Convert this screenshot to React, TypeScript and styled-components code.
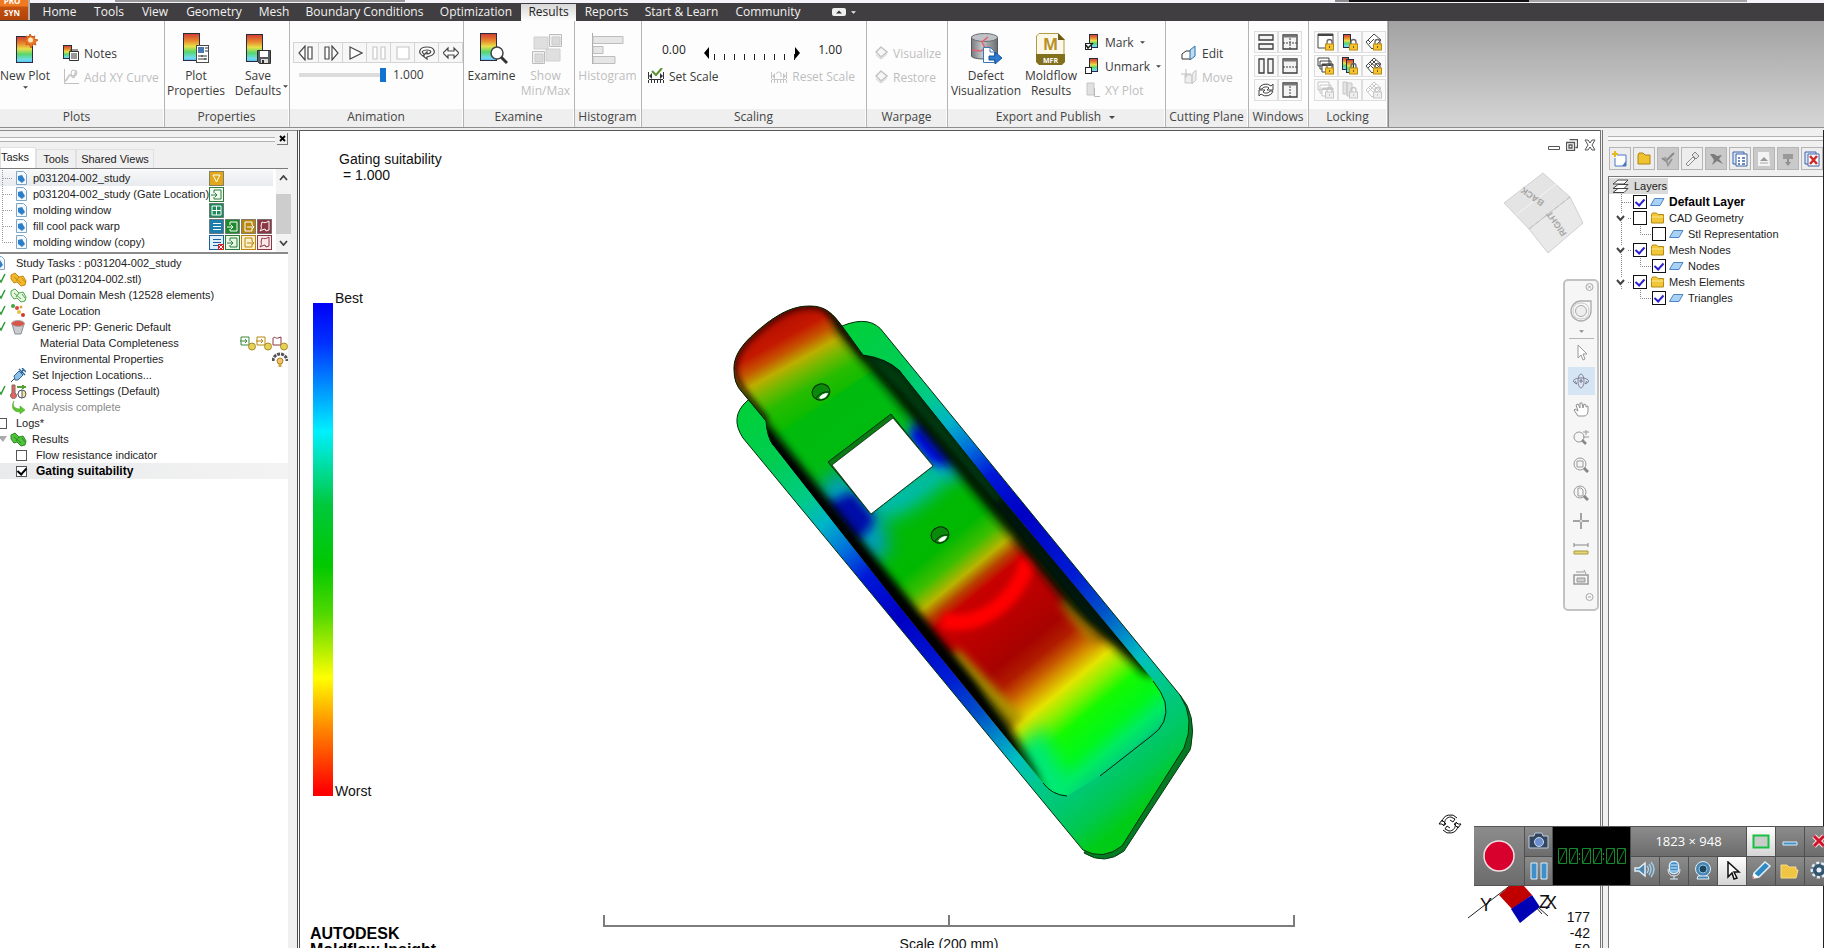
import React, { ReactNode } from 'react';
import styled, { createGlobalStyle, css } from 'styled-components';

const uiFont = `"Open Sans", "Noto Sans", sans-serif`;
const classicFont = `"Liberation Sans", Arial, sans-serif`;

const GlobalStyle = createGlobalStyle`
  * { box-sizing: border-box; }
  body { margin: 0; background: #fff; overflow: hidden; }
  button { font: inherit; color: inherit; padding: 0; margin: 0; border: 0; background: none; cursor: pointer; }
  svg { display: block; flex: none; }
`;

/* ---------- frame ---------- */
const App_ = styled.div`
  display: flex;
  flex-direction: column;
  height: 100vh;
  position: relative;
  overflow: hidden;
  font-family: ${uiFont};
  font-size: 12px;
  color: #3a3a3a;
`;
const TitleStrip = styled.div`
  display: flex;
  height: 3px;
  flex: none;
  background: #f4f4fa;
`;
const StripBar = styled.span<{ $w: number; $gap?: number; $c: string; $h?: number }>`
  width: ${p => p.$w}px;
  height: ${p => p.$h ?? 2}px;
  margin-left: ${p => p.$gap ?? 0}px;
  background: ${p => p.$c};
`;
const MenuBar = styled.nav`
  display: flex;
  height: 18px;
  flex: none;
  padding-left: 33px;
  background: #403e40;
  color: #f2f2f2;
`;
const MenuTab = styled.button<{ $w: number; $active?: boolean }>`
  width: ${p => p.$w}px;
  height: 17px;
  margin-top: 1px;
  line-height: 16px;
  white-space: nowrap;
  display: flex;
  justify-content: center;
  ${p => p.$active && css`background: linear-gradient(#d8d8d8, #fdfdfd); color: #222;`}
`;
const MenuToggle = styled.button`
  display: flex;
  align-items: center;
  gap: 5px;
  margin-left: 22px;
`;
const AppButton = styled.button`
  position: absolute;
  left: 0;
  top: 0;
  width: 30px;
  height: 20px;
  border-right: 2px solid #b9aca4;
  background: linear-gradient(#ef7a22 0 6px, #c4520f 7px, #b0440a);
  color: #fff;
  font-size: 8px;
  font-weight: 700;
  line-height: 8px;
  overflow: hidden;
  display: flex;
  flex-direction: column;
  justify-content: flex-end;
  align-items: center;
  padding: 0 4px 3px 0;
  gap: 4px;
`;

/* ---------- ribbon ---------- */
const Ribbon = styled.header`
  display: flex;
  height: 107px;
  flex: none;
  background: linear-gradient(90deg, #9b9b9b, #b5b5b5);
  border-bottom: 1px solid #8e8e8e;
`;
const RibbonRest = styled.div`
  flex: 1;
  background: linear-gradient(#a2a2a2, #b9b9b9 45%, #d6d6d6);
  border-left: 1px solid #8a8a8a;
`;
const GroupBox = styled.section<{ $w: number }>`
  display: flex;
  flex-direction: column;
  width: ${p => p.$w}px;
  flex: none;
  background: #fdfdfd;
  border-right: 1px solid #b4b4b4;
  padding: 0 1px 0 0;
`;
const GroupBody = styled.div<{ $pad?: string }>`
  flex: 1;
  display: flex;
  align-items: flex-start;
  padding: ${p => p.$pad ?? '0'};
`;
const GroupName = styled.h2<{ $cut?: boolean }>`
  margin: 0;
  height: 18px;
  padding: 0 ${p => (p.$cut ? 10 : 0)}px 2px 0;
  line-height: 16px;
  font-size: 12px;
  font-weight: 400;
  text-align: center;
  white-space: nowrap;
  background: #efefef;
  color: #444;
  display: flex;
  align-items: center;
  justify-content: center;
  gap: 7px;
`;
const BigBtn = styled.button<{ $w: number; $off?: boolean }>`
  display: flex;
  flex-direction: column;
  align-items: center;
  gap: 3px;
  width: ${p => p.$w}px;
  padding-top: 12px;
  flex: none;
  line-height: 15px;
  white-space: pre;
  text-align: center;
  position: relative;
  ${p => p.$off && css`color: #bdbdbd;`}
`;
const CornerCaret = styled.span`
  position: absolute;
  right: 1px;
  bottom: 10px;
`;
const SmallCol = styled.div<{ $top: number; $left: number }>`
  display: flex;
  flex-direction: column;
  padding: ${p => p.$top}px 0 0 ${p => p.$left}px;
`;
const SmallBtn = styled.button<{ $off?: boolean; $gap?: number }>`
  display: flex;
  align-items: center;
  gap: ${p => p.$gap ?? 5}px;
  height: 24px;
  white-space: nowrap;
  ${p => p.$off && css`color: #bdbdbd;`}
`;
const AnimCol = styled.div`
  display: flex;
  flex-direction: column;
  gap: 5px;
`;
const AnimRow = styled.div`
  display: flex;
  border: 1px solid #d4d4d4;
`;
const AnimBtn = styled.button`
  width: 24px;
  height: 19px;
  display: flex;
  align-items: center;
  justify-content: center;
  background: #f7f7f7;
  & + & { border-left: 1px solid #d4d4d4; }
`;
const SliderRow = styled.label`
  display: flex;
  align-items: center;
  gap: 7px;
  height: 16px;
  line-height: 14px;
  padding: 0 0 2px 6px;
`;
const Slider = styled.input`
  appearance: none;
  width: 87px;
  height: 14px;
  margin: 0;
  background: linear-gradient(#0000 5px, #dcdcdc 5px 9px, #0000 9px);
  &::-webkit-slider-thumb {
    appearance: none;
    width: 6px;
    height: 14px;
    background: #1173cf;
  }
`;
const ScaleCol = styled.div`
  flex: 1;
  display: flex;
  flex-direction: column;
  gap: 4px;
`;
const ScaleRow = styled.div`
  display: flex;
  justify-content: space-between;
  height: 19px;
  line-height: 18px;
  padding: 0 23px 0 14px;
  color: #222;
`;
const ScaleBtns = styled.div`
  display: flex;
  justify-content: space-between;
  padding-right: 10px;
`;
const IconGrid = styled.div<{ $cols: number }>`
  display: grid;
  grid-template-columns: repeat(${p => p.$cols}, 24px);
  grid-auto-rows: 22px;
  row-gap: 2px;
`;
const GridBtn = styled.button`
  display: flex;
  align-items: center;
  justify-content: center;
  border: 1px solid #dedede;
  background: #fafafa;
`;

/* ---------- work area ---------- */
const Work = styled.main`
  flex: 1;
  min-height: 0;
  display: flex;
  background: #f0f0f0;
  border-top: 2px solid #efefef;
  font-family: ${classicFont};
`;
const LeftDock = styled.aside`
  width: 297px;
  flex: none;
  display: flex;
  flex-direction: column;
  padding-right: 9px;
  font-size: 11px;
  color: #1d1d1d;
  border-top: 1px solid #8a8a8a;
`;
const GripRow = styled.div`
  display: flex;
  align-items: center;
  gap: 2px;
  height: 16px;
  flex: none;
`;
const Grip = styled.span`
  flex: 1;
  height: 5px;
  border-top: 1px solid #b2b2b2;
  border-bottom: 1px solid #b2b2b2;
  background: #fafafa;
`;
const CloseBox = styled.button`
  width: 11px;
  height: 12px;
  border-right: 1px solid #777;
  border-bottom: 1px solid #777;
  display: flex;
  align-items: center;
  justify-content: center;
`;
const Tabs = styled.div`
  display: flex;
  align-items: flex-end;
  height: 21px;
  flex: none;
`;
const Tab = styled.button<{ $w: number; $on?: boolean }>`
  width: ${p => p.$w}px;
  height: ${p => (p.$on ? 21 : 19)}px;
  background: ${p => (p.$on ? '#fff' : '#f0f0f0')};
  border: 1px solid #e0e0e0;
  border-bottom: 0;
  white-space: nowrap;
  font-size: 11px;
  ${p => p.$on && css`padding: 0 9px 3px 0;`}
`;
const StudyBox = styled.div`
  display: flex;
  height: 86px;
  flex: none;
  border-top: 1px solid #7c7c7c;
  border-bottom: 2px solid #8a8a8a;
  background: #fff;
`;
const StudyList = styled.div`
  flex: 1;
  padding-top: 1px;
`;
const StudyRow = styled.div<{ $on?: boolean }>`
  display: flex;
  align-items: center;
  height: 16px;
  margin-right: 3px;
  white-space: nowrap;
  background: ${p => (p.$on ? 'linear-gradient(#f7f8f9, #e8ebee)' : 'none')};
`;
const StudyName = styled.span`
  width: 176px;
`;
const ScrollBar = styled.div`
  width: 15px;
  display: flex;
  flex-direction: column;
  align-items: center;
  background: #f3f3f3;
`;
const ScrollBtn = styled.button`
  height: 18px;
  width: 15px;
  display: flex;
  align-items: center;
  justify-content: center;
`;
const ScrollThumb = styled.div`
  width: 15px;
  height: 40px;
  margin-top: 7px;
  background: #cdcdcd;
`;
const TaskTree = styled.div`
  flex: 1;
  background: #fff;
  overflow: hidden;
  padding-top: 1px;
`;
const TaskRow = styled.div<{ $on?: boolean }>`
  display: flex;
  align-items: center;
  height: 16px;
  margin-left: -9px;
  white-space: nowrap;
  ${p => p.$on && css`background: linear-gradient(90deg, #e9eaec, #f3f3f3); font-size: 12px; font-weight: 700; color: #000;`}
`;
const Slot = styled.span<{ $w: number }>`
  width: ${p => p.$w}px;
  display: flex;
  flex: none;
  align-items: center;
`;
const Muted = styled.span`color: #8a8a8a;`;
const RowEnd = styled.span`
  margin-left: auto;
  display: flex;
  align-items: center;
`;
const Check = styled.input<{ $size: number; $ink: string }>`
  appearance: none;
  width: ${p => p.$size}px;
  height: ${p => p.$size}px;
  margin: 0;
  flex: none;
  border: 1px solid ${p => (p.$size > 11 ? '#111' : '#555')};
  background: #fff;
  display: grid;
  place-items: center;
  &:checked::before {
    content: '';
    width: 4px;
    height: 7px;
    border: solid ${p => p.$ink};
    border-width: 0 2px 2px 0;
    transform: translateY(-1px) rotate(42deg);
  }
`;
const RowLabel = styled.label`
  display: flex;
  align-items: center;
`;

/* ---------- viewport ---------- */
const Viewport = styled.section`
  flex: 1;
  position: relative;
  min-width: 0;
  overflow: hidden;
  background: #fff;
  border-top: 1px solid #555;
  border-left: 3px double #4c4c4c;
  color: #111;
  font-size: 14px;
  line-height: 16px;
`;
const Scene = styled.svg`
  position: absolute;
  inset: 0;
  width: 100%;
  height: 100%;
`;
const Caption = styled.div`
  position: absolute;
  left: 39px;
  top: 20px;
  white-space: pre;
`;
const Legend = styled.div`
  position: absolute;
  left: 13px;
  top: 172px;
  display: flex;
  gap: 2px;
`;
const LegendBar = styled.div`
  width: 20px;
  height: 493px;
  background: linear-gradient(#0000f5, #0030ff 8%, #00f0ff 26%, #00c83c 41%, #00c800 53%, #50d800 63%, #ffff00 76%, #ff8a00 86%, #ff0000 99%);
`;
const LegendEnds = styled.div`
  display: flex;
  flex-direction: column;
  justify-content: space-between;
  margin-top: -13px;
  height: 509px;
`;
const Brand = styled.div`
  position: absolute;
  left: 10px;
  top: 795px;
  font-size: 16px;
  font-weight: 700;
  line-height: 16px;
  color: #000;
`;
const ScaleMark = styled.div`
  position: absolute;
  left: 50%;
  top: 784px;
  width: 692px;
  margin-left: -347px;
  text-align: center;
`;
const Ruler = styled.div`
  display: flex;
  height: 12px;
  margin-bottom: 9px;
  border: 2px solid #7d7d7d;
  border-top: 0;
  &::after {
    content: '';
    margin: auto;
    width: 2px;
    height: 10px;
    background: #7d7d7d;
  }
`;
const Angles = styled.div`
  position: absolute;
  right: 10px;
  top: 778px;
  text-align: right;
`;
const WindowBtns = styled.div`
  position: absolute;
  right: 4px;
  top: 8px;
  display: flex;
  gap: 6px;
  align-items: center;
`;
const NavBar = styled.div`
  position: absolute;
  right: 1px;
  top: 148px;
  width: 36px;
  height: 332px;
  border: 2px solid #c2c2c2;
  border-radius: 5px;
  background: #f6f6f6;
  display: flex;
  flex-direction: column;
  align-items: center;
`;
const NavEnd = styled.button`
  align-self: flex-end;
  height: 12px;
  padding-right: 3px;
`;
const NavWheel = styled.button`
  display: flex;
  flex-direction: column;
  align-items: center;
  width: 25px;
  height: 46px;
  padding-top: 7px;
  gap: 8px;
  border-bottom: 1px solid #b5b5b5;
`;
const NavBtn = styled.button<{ $on?: boolean }>`
  width: 27px;
  height: 28px;
  display: flex;
  align-items: center;
  justify-content: center;
  background: ${p => (p.$on ? '#d5e5f3' : 'none')};
`;
const SpinCursor = styled.div`
  position: absolute;
  right: 138px;
  top: 682px;
`;
const RightDock = styled.aside`
  width: 224px;
  flex: none;
  display: flex;
  flex-direction: column;
  padding-left: 5px;
  border-left: 3px double #777;
  border-right: 1px solid #222;
  font-size: 11px;
  color: #1d1d1d;
`;
const LayerTools = styled.div`
  display: flex;
  gap: 2px;
  height: 29px;
  padding-left: 1px;
  flex: none;
  overflow: hidden;
`;
const LayerBtn = styled.button<{ $off?: boolean }>`
  width: 22px;
  height: 23px;
  flex: none;
  border: 1px solid #b5b5b5;
  background: ${p => (p.$off ? '#c9c9c9' : '#ededed')};
  display: flex;
  align-items: center;
  justify-content: center;
`;
const LayerGrip = styled.div`
  height: 17px;
  flex: none;
  display: flex;
  align-items: center;
`;
const LayerTree = styled.div`
  flex: 1;
  background: #fff;
  border-top: 1px solid #777;
  border-left: 1px solid #777;
  padding-top: 1px;
`;
const LayerRoot = styled.div`
  display: flex;
  align-items: center;
  gap: 5px;
  height: 16px;
  width: 59px;
  padding-left: 3px;
  background: #dadada;
`;
const LayerRow = styled.div<{ $strong?: boolean }>`
  display: flex;
  align-items: center;
  height: 16px;
  white-space: nowrap;
  ${p => p.$strong && css`font-weight: 700; font-size: 12px; color: #000;`}
`;
const LayerLabel = styled.label`
  display: flex;
  align-items: center;
  & > svg { margin: 0 4px 0 3px; }
`;

/* ---------- recorder ---------- */
const Recorder = styled.div`
  position: absolute;
  right: 0;
  bottom: 62px;
  width: 350px;
  height: 60px;
  overflow: hidden;
  display: flex;
  gap: 1px;
  background: #505050;
  border-top: 1px solid #555;
  border-bottom: 1px solid #555;
  color: #fff;
`;
const RecBtn = styled.button<{ $w: number; $on?: boolean }>`
  width: ${p => p.$w}px;
  flex: none;
  display: flex;
  align-items: center;
  justify-content: center;
  background: ${p => (p.$on ? 'linear-gradient(#fff, #d5d5d5)' : 'linear-gradient(#8c8c8c, #6c6c6c)')};
`;
const RecStack = styled.div`
  display: flex;
  flex-direction: column;
  gap: 1px;
  flex: none;
  & > button { flex: 1; }
`;
const RecRow = styled.div`
  display: flex;
  gap: 1px;
  flex: 1;
`;
const RecTime = styled.div`
  width: 77px;
  flex: none;
  background: #000;
  display: flex;
  align-items: center;
  justify-content: center;
`;
const RecSize = styled.div`
  width: 115px;
  flex: none;
  font-size: 13px;
  line-height: 28px;
  text-align: center;
  background: linear-gradient(#8c8c8c, #6c6c6c);
`;

/* ---------- small drawings ---------- */
type IconProps = { w?: number; h?: number; vb?: string; children: ReactNode };
const Icon = ({ w = 16, h = w, vb, children }: IconProps) => (
  <svg width={w} height={h} viewBox={vb ?? `0 0 ${w} ${h}`} fill="none" aria-hidden="true">{children}</svg>
);
const Caret = ({ c = '#444', w = 5 }: { c?: string; w?: number }) => (
  <Icon w={w} h={3} vb="0 0 6 3"><path d="M0 0h6l-3 3z" fill={c} /></Icon>
);
const Plot = ({ x = 0, y = 0, w = 17, h = 28 }: { x?: number; y?: number; w?: number; h?: number }) => (
  <rect x={x + 0.5} y={y + 0.5} width={w - 1} height={h - 1} fill="url(#rainbow)" stroke="#2b2b40" />
);
const Defs = () => (
  <svg width="0" height="0" style={{ position: 'absolute' }} aria-hidden="true">
    <defs>
      <linearGradient id="rainbow" x1="0" y1="0" x2="0" y2="1">
        <stop offset="0" stopColor="#cf3b35" />
        <stop offset=".28" stopColor="#e98b2d" />
        <stop offset=".48" stopColor="#e6e04a" />
        <stop offset=".68" stopColor="#57d66b" />
        <stop offset=".9" stopColor="#6fdcf2" />
        <stop offset="1" stopColor="#55b8ee" />
      </linearGradient>
      <linearGradient id="metal" x1="0" x2="1" y1="0" y2="0">
        <stop offset="0" stopColor="#77797c" />
        <stop offset=".4" stopColor="#c3c5c8" />
        <stop offset="1" stopColor="#6a6c70" />
      </linearGradient>
    </defs>
  </svg>
);

const NewPlotIcon = () => (
  <Icon w={32}><Plot x={7} y={3} w={17} h={27} />
    <path d="M21 1l2 3 3-1-1 3 4 1-3 2 1 3-3-1-2 4-2-4-3 1 1-3-4-2 4-1-1-3 3 1z" fill="#ea7a26" stroke="#d2601a" />
    <circle cx="21.500" cy="7" r="2.500" fill="#ffe9c0" /></Icon>
);
const PlotPropsIcon = () => (
  <Icon w={32}><Plot x={3} y={0} /><rect x="16.500" y="12.500" width="12" height="17" fill="#fff" stroke="#4a4a4a" />
    <path d="M18 14h6v6h-6z" fill="#4878b0" /><path d="M25 15h3M25 18h3M18 23h9M18 26h9M22 22v2M25 25v2" stroke="#333" /></Icon>
);
const SaveIcon = () => (
  <Icon w={32}><Plot x={4} y={1} /><path d="M15.500 17.500h13v13h-11l-2-2z" fill="#5b5b5f" stroke="#2e2e2e" />
    <path d="M18 18h8v6h-8z" fill="#fff" /><path d="M19 26h7v4h-7z" fill="#ddd" /><path d="M20 27h2v3h-2z" fill="#333" /></Icon>
);
const ExamineIcon = () => (
  <Icon w={32}><Plot x={4} y={0} /><circle cx="21" cy="20" r="6" fill="#fff" stroke="#444" strokeWidth="1.500" />
    <path d="M25 24l6 6" stroke="#333" strokeWidth="3" /></Icon>
);
const MinMaxIcon = () => (
  <Icon w={32}><path d="M4 4h14v12H4zM16 16h14v12H16z" fill="#dfdfdf" stroke="#d0d0d0" />
    <path d="M19.500 1.500h12v12h-12zM2.500 18.500h12v12h-12z" fill="#f2f2f2" stroke="#bdbdbd" />
    <path d="M22 4h8v8h-8zM5 21h8v8H5z" fill="#dadada" stroke="#ccc" /></Icon>
);
const HistIcon = () => (
  <Icon w={34} h={32}><path d="M1.500 0v31" stroke="#aaa" /><path d="M2 3.500h30v7H2zM2 13.500h10v7H2zM2 23.500h22v7H2z" fill="#e6e6e6" stroke="#bdbdbd" /></Icon>
);
const DefectIcon = () => (
  <Icon w={32}><path d="M1.500 4v19c0 4 26 4 26 0V4z" fill="url(#metal)" stroke="#55585c" />
    <ellipse cx="14.500" cy="4.500" rx="13" ry="4" fill="#bfc2c6" stroke="#6b6d70" />
    <path d="M18 4l-6 5 3 6-4 3-9-1M15 15l4-1" stroke="#e2606c" strokeWidth="1.500" />
    <path d="M13.500 14.500h7l4 4v11h-11z" fill="#fff" stroke="#3c78b4" /><path d="M20 14v5h5" stroke="#3c78b4" />
    <path d="M19 23h6v-4l7 6-7 6v-4h-6z" fill="#2b7bd0" stroke="#15549b" /></Icon>
);
const MfrIcon = () => (
  <Icon w={32}><path d="M4 .500h19l6 6V23H1.500V3z" fill="#fbf8ea" stroke="#b39b40" /><path d="M23 0v7h7z" fill="#6e5a14" />
    <path d="M1 21h29v8l-3 3H4l-3-3z" fill="#82701f" />
    <text x="15.500" y="17" fontSize="16" fontWeight="700" textAnchor="middle" fill="#b8912b" fontFamily="Open Sans">M</text>
    <text x="15.500" y="30" fontSize="7" fontWeight="700" textAnchor="middle" fill="#fff" fontFamily="Open Sans">MFR</text></Icon>
);
const NotesIcon = () => (
  <Icon><Plot x={0} y={0} w={9} h={14} /><path d="M6.500 6.500h9v9h-9z" fill="#fff" stroke="#333" />
    <path d="M8 4v3M10 4v3M12 4v3M14 4v3M8 9h6M8 11h6M8 13h6" stroke="#333" /></Icon>
);
const CurveIcon = () => (
  <Icon><path d="M1.500 0v14.500H16" stroke="#c0c0c0" /><path d="M2 12c3-1 3-6 5-6s2 3 4 2l2-6" stroke="#ccc" strokeWidth="2" />
    <circle cx="11" cy="4" r="3" stroke="#c4c4c4" /></Icon>
);
const SetScaleIcon = ({ off = false }) => {
  const c = off ? '#c4c4c4' : '#333';
  return (
    <Icon><path d="M.500 4v7M15.500 4v7M1 11.500h14M3.500 12v3M6.500 12v3M9.500 12v3M12.500 12v3M.500 12v3M15.500 12v3" stroke={c} />
      <path d="M1 8l3-3v6zM15 8l-3-3v6z" fill={c} /><path d={off ? 'M5 6a3 3 0 015-1v4' : 'M4 3l4 4 6-7'} stroke={off ? c : '#5f9130'} strokeWidth={off ? 1 : 2} /></Icon>
  );
};
const WarpIcon = () => (
  <Icon w={14} h={16}><path d="M7 2l6 5-6 5-5-5z" stroke="#c4c4c4" strokeWidth="1.500" fill="#f6f6f6" /><path d="M2 10l5 4 6-5" stroke="#d0d0d0" /></Icon>
);
const MarkIcon = ({ kind }: { kind: 'on' | 'off' | 'xy' }) =>
  kind === 'xy' ? (
    <Icon w={15} h={16}><path d="M2 1h7v12H2z" fill="#e0e0e0" stroke="#c4c4c4" /><path d="M9.500 6v8.500H15" stroke="#b8b8b8" /></Icon>
  ) : (
    <Icon w={14} h={16}><Plot x={4} y={0} w={9} h={14} /><rect x=".500" y="9.500" width="6" height="6" fill="#fff" stroke="#222" />
      {kind === 'on' && <path d="M1 11l2 3 5-5" stroke="#222" strokeWidth="1.500" />}</Icon>
  );
const CutIcon = () => (
  <Icon><path d="M1 14V9l4-3h5v8z" fill="#fff" stroke="#333" /><path d="M9 15V5l5-4v10z" fill="#b9ddf5" stroke="#2f6f9f" /></Icon>
);
const MoveIcon = () => (
  <Icon><path d="M4 6h7v8H4zM11 15V5l4-4v10z" fill="#eee" stroke="#c8c8c8" /><path d="M5 0v9M0 5h10" stroke="#bdbdbd" /></Icon>
);
/* outline and dashed divider of each window arrangement */
const windowArt: [string, string][] = [
  ['M1 1h14v5H1zM1 10h14v5H1z', ''], ['M1 1h14v14H1z', 'M8 4v11M1 9h14'], ['M1 1h5v14H1zM10 1h5v14h-5z', ''],
  ['M1 1h14v14H1z', 'M1 9h14'], ['', ''], ['M1 1h14v14H1z', 'M8 4v11'],
];
const WindowIcon = ({ n }: { n: number }) => (
  <Icon vb="0 0 16 16">
    {n === 4 ? (
      <path d="M1 7a7 6 0 0112-3l2-2v6h-6l2-2a4 3 0 00-7 1zM15 9a7 6 0 01-12 3l-2 2V8h6l-2 2a4 3 0 007-1z" fill="#fff" stroke="#444" />
    ) : (
      <>
        <path d={windowArt[n][0]} stroke="#3c3c3c" strokeWidth="1.300" fill="#f3f3f3" />
        {n % 2 === 1 && <path d="M1 2.500h14" stroke="#777" strokeWidth="2" />}
        <path d={windowArt[n][1]} stroke="#3c3c3c" strokeDasharray="2 1" />
      </>
    )}
  </Icon>
);
const LockIcon = ({ n }: { n: number }) => {
  const off = n > 5, c = off ? '#c6c6c6' : '#444', col = n % 3, multi = n > 2;
  return (
    <Icon w={18} vb="0 0 18 18">
      {col === 0 && <>{multi && <path d="M1 1h11v8H1zM3 4h11v8H3z" fill="#fff" stroke={c} />}
        <path d={multi ? 'M5 7h11v8H5z' : 'M1 1h15v14H1z'} fill="#fff" stroke={c} /><path d={multi ? 'M5 8h11' : 'M1 2h15'} stroke={c} strokeWidth="2" /></>}
      {col === 1 && (off ? <path d="M2 1h4v12H2zM6 2h5v13H6z" fill="#e4e4e4" stroke={c} /> : <>{multi && <Plot x={1} y={0} w={7} h={13} />}<Plot x={multi ? 5 : 2} y={multi ? 2 : 1} w={8} h={14} /></>)}
      {col === 2 && <><path d="M1 9l8-8 7 6-9 9z" fill="#fff" stroke={c} /><path d={multi ? 'M5 5l7 6M3 11l8-8M4 7l7 7M7 3l6 6' : 'M3 7l3 3M4 11l5-5'} stroke={c} /></>}
      <path d="M10 12V9a2.500 2.500 0 015 0v3" stroke={off ? c : '#666'} strokeWidth="1.300" />
      <rect x="8.500" y="11" width="8" height="6" fill={off ? '#eee' : '#f6c431'} stroke={off ? c : '#b98a12'} /><path d="M12.500 13v2" stroke={off ? c : '#7a5a00'} />
    </Icon>
  );
};
const animPaths: [string, boolean][] = [
  ['M7 1v14L1 8zM10 2h4v12h-4z', false], ['M2 2h4v12H2zM9 1v14l6-7z', false], ['M3 2l12 6-12 6z', false],
  ['M2 2h4v12H2zM10 2h4v12h-4z', true], ['M2 2h12v12H2z', true],
  ['M5 11C-2 9 0 2 8 2s10 7 3 9l-3 1v2L4 11l4-4v2c5-1 5-4 0-4S2 7 5 9z', false], ['M0 8l5-5v3h6V3l5 5-5 5v-3H5v3z', false],
];
const DocIcon = () => (
  <Icon w={16} h={14}><path d="M3.500.500h7l3 3v10h-10z" fill="#f2f8fd" stroke="#7fa6c4" /><path d="M5 5l4-1 3 5-3 3-4-3z" fill="#2f7fc8" /></Icon>
);
const Tick = () => <Icon w={16} h={12}><path d="M8 6l2 3 4-8" stroke="#2c9a35" strokeWidth="1.500" /></Icon>;
const PartIcon = ({ fill, line }: { fill: string; line: string }) => (
  <Icon w={17} h={15}><path d="M1 3l4-2 4 4 4-1 3 5-1 4-4 1-4-4-3 1-3-4z" fill={fill} stroke={line} /><path d="M4 5l7 6M9 5l-3 4M12 6l3 4" stroke={line} /></Icon>
);
const GateIcon = () => (
  <Icon w={16} h={14}><circle cx="3" cy="2" r="2" fill="#3aa83a" /><circle cx="7" cy="4" r="2" fill="#d44" /><circle cx="11" cy="3" r="1.500" fill="#e9a23b" /><circle cx="9" cy="8" r="2" fill="#e6c33b" /><circle cx="13" cy="11" r="2" fill="#cc3a30" /></Icon>
);
const CupIcon = () => (
  <Icon w={16} h={15}><path d="M2 4h12l-3 10H5z" fill="#c9ccd0" stroke="#8a8d90" /><ellipse cx="8" cy="3.500" rx="6.500" ry="3" fill="#d85548" stroke="#aaa" /></Icon>
);
const SyringeIcon = () => (
  <Icon w={16} h={15}><path d="M1 14l4-4" stroke="#444" /><path d="M4 8l5-5 4 4-5 5H5z" fill="#8fc0e8" stroke="#2b659a" /><path d="M9 1l6 6M11 5l3-4M12 0l4 4" stroke="#2b659a" strokeWidth="1.500" /></Icon>
);
const ProcessIcon = () => (
  <Icon w={17} h={15}><path d="M2 1h3v8a3 3 0 11-3 0z" fill="#d66" stroke="#865" /><path d="M7 3h9M13 1v4" stroke="#56a23a" strokeWidth="2" /><circle cx="12" cy="10" r="4" fill="#f4e48a" stroke="#557" /><path d="M12 6a4 4 0 000 8z" fill="#fff" stroke="#557" /></Icon>
);
const ArrowIcon = () => <Icon w={16} h={14}><path d="M4 1c-2 4 0 8 6 8V6l5 4-5 4v-2C2 12 1 6 4 1z" fill="#5cc62e" stroke="#3f9a1c" strokeWidth=".500" /></Icon>;
const ChipIcon = ({ bg, ink, kind }: { bg: string; ink: string; kind: string }) => (
  <Icon w={16} h={15}><rect x=".500" y=".500" width="14" height="14" fill={bg} stroke={ink === '#fff' ? '#555a' : ink} />
    {kind === 'tri' && <path d="M4 4h7l-3.500 7z" stroke={ink} />}
    {kind === 'in' && <path d="M5 6V3h7v9H5v-2M2 8h6M6 6l2 2-2 2" stroke={ink} />}
    {kind === 'out' && <path d="M11 6V3H4v9h7V9M6 8h7M11 6l2 2-2 2" stroke={ink} />}
    {kind === 'grid' && <path d="M3 3h9v9H3zM7.500 3v9M3 7.500h9" stroke={ink} />}
    {kind === 'lines' && <path d="M4 4.500h8M4 7.500h8M4 10.500h8" stroke={ink} />}
    {kind === 'warp' && <path d="M5 3c2 1 4 1 7-1v9l-3 1-1-2-3 1-2 1c1-2 2-3 1-5z" stroke={ink} />}
    {kind === 'linesx' && <><path d="M4 4.500h8M4 7.500h8M4 10.500h5" stroke={ink} /><path d="M9 9h6v6H9z" fill="#c22" /><path d="M10 10l4 4M14 10l-4 4" stroke="#fff" /></>}
  </Icon>
);
const MatIcon = ({ kind, c }: { kind: string; c: string }) => (
  <Icon w={16} h={15}><path d={kind === 'warp' ? 'M1 2c2-2 3 1 5 0l3-1v8H1z' : 'M1 1h8v8H1zM0 5h7M5 3l2 2-2 2'} stroke={c} /><circle cx="12" cy="10.500" r="3.500" fill="#e8cf5a" stroke="#a58f22" /></Icon>
);
const DialIcon = () => (
  <Icon w={16} h={15}><path d="M1 9a7 7 0 0114 0" stroke="#555" strokeWidth="3" strokeDasharray="3 1" /><circle cx="8" cy="9" r="3" fill="#f2c268" stroke="#b5812a" /><path d="M8 12v3" stroke="#d9a33b" strokeWidth="3" /></Icon>
);
const PlaneIcon = () => <Icon w={15} h={10}><path d="M4.500 1.500H14l-4 7H.500z" fill="#a9d0f7" stroke="#4c86c6" /></Icon>;
const FolderIcon = ({ w = 15 }: { w?: number }) => (
  <Icon w={w} h={12} vb="0 0 14 12"><path d="M1 2.500l1-1.500h4l1.500 1.500H13v8.500H1z" fill="#f3c735" stroke="#b28a17" /><path d="M1 5h12" stroke="#fbe48e" /></Icon>
);
const Chevron = ({ up = false }: { up?: boolean }) => <Icon w={9} h={6}><path d={up ? 'M1 5l3.500-4L8 5' : 'M1 1l3.500 4L8 1'} stroke="#444" strokeWidth="1.800" /></Icon>;

/* ---------- part model, drawn in length / width coordinates of the part ---------- */
const AXES = 'matrix(.635 .772 .772 -.635 0 0)';
const bodyPath = 'M734 370C733 352 748 338 767 323C782 312 794 306 810 306C826 306 833 314 842 326L863 355Q886 358 900 371L1003 500L1153 680Q1174 704 1159 726Q1152 733 1100 776L1067 796Q1052 795 1043 783L900 607L773 445Q767 437 766 421L742 392Q734 384 734 370Z';
const platePath = 'M842 326Q871 314 884 333L1180 695Q1196 719 1184 748L1122 846Q1103 861 1083 850L743 438Q729 417 747 401Z';

const lengthStops: [number, string][] = [
  [735, '#0b0'], [868, '#00bb10'], [1020, '#00b800'], [1040, '#3cbe00'], [1057, '#b8b400'], [1069, '#b84200'], [1080, '#c80000'],
  [1112, '#bc0000'], [1150, '#a60300'], [1168, '#b01c00'], [1182, '#c65800'], [1193, '#d89400'], [1208, '#e4e400'], [1224, '#8af000'],
  [1242, '#14fa00'], [1268, '#00f81c'], [1284, '#00ec60'], [1300, '#00d078'],
];
const plateStops: [number, string][] = [
  [790, '#00d03a'], [847, '#00cd50'], [896, '#00cb86'], [929, '#00b4c8'], [962, '#0070dc'], [996, '#0018d8'], [1048, '#0000c4'],
  [1128, '#001cd4'], [1174, '#0052c8'], [1208, '#0092c8'], [1233, '#00c0c0'], [1266, '#00c88c'], [1300, '#00c86e'], [1325, '#00c850'], [1350, '#00cc18'],
];
const Stops = ({ list, a, b }: { list: [number, string][]; a: number; b: number }) => (
  <>{list.map(([u, c]) => <stop key={u} offset={(u - a) / (b - a)} stopColor={c} />)}</>
);
const Hole = ({ x, y }: { x: number; y: number }) => (
  <g transform={`translate(${x} ${y})`}>
    <ellipse rx="9" ry="8" fill="#0a8a0a" stroke="#062806" transform="rotate(-20)" />
    <path d="M-2 6Q1 1 7 1Q6 6 0 7Z" fill="#fff" /><path d="M-5 6Q0 -1 8 0" stroke="#063806" fill="none" />
  </g>
);
const Model = () => (
  <Scene viewBox="300 131 1300 817" role="img" aria-label="Gating suitability plot of the part">
    <defs>
      <linearGradient id="len" gradientUnits="userSpaceOnUse" x1="735" x2="1300" y1="0" y2="0"><Stops list={lengthStops} a={735} b={1300} /></linearGradient>
      <linearGradient id="cap" gradientUnits="userSpaceOnUse" x1="735" y1="385" x2="843" y2="365">
        <stop offset="0" stopColor="#b40c00" /><stop offset=".21" stopColor="#c41800" /><stop offset=".33" stopColor="#c65400" />
        <stop offset=".45" stopColor="#bcae00" /><stop offset=".56" stopColor="#78b800" /><stop offset=".72" stopColor="#28bc00" /><stop offset="1" stopColor="#00bb00" />
      </linearGradient>
      <linearGradient id="plate" gradientUnits="userSpaceOnUse" x1="790" x2="1350" y1="0" y2="0" gradientTransform={AXES}><Stops list={plateStops} a={790} b={1350} /></linearGradient>
      <clipPath id="bodyClip"><path d={bodyPath} /></clipPath>
      <filter id="b3" x="-50%" y="-50%" width="200%" height="200%"><feGaussianBlur stdDeviation="3" /></filter>
      <filter id="b5" x="-50%" y="-50%" width="200%" height="200%"><feGaussianBlur stdDeviation="5" /></filter>
      <filter id="b9" x="-50%" y="-50%" width="200%" height="200%"><feGaussianBlur stdDeviation="9" /></filter>
    </defs>
    <path d="M1180 695Q1197 715 1191 746L1190 750L1124 851Q1105 866 1084 853Z" fill="#067a22" stroke="#043a12" />
    <path d={platePath} fill="url(#plate)" stroke="#04300c" />
    <g clipPath="url(#bodyClip)">
      <g transform={AXES}>
        <rect x="700" y="280" width="640" height="200" fill="url(#len)" />
        <path d="M690 280H825L845 480H690Z" fill="url(#cap)" />
        <path d="M1140 460V436Q1170 432 1195 436V460Z" fill="#a87800" filter="url(#b5)" />
        <path d="M1110 300V327Q1150 331 1205 334V300Z" fill="#a89400" filter="url(#b5)" />
        <path d="M1225 300V345Q1245 332 1290 330V300Z" fill="#00e878" filter="url(#b9)" />
        <path d="M1078 334Q1102 350 1103 385Q1104 415 1084 442" stroke="#ff0600" strokeWidth="16" fill="none" filter="url(#b3)" />
        <path d="M935 345H950Q980 350 972 445H920V425H950Z" fill="#00bcb0" filter="url(#b9)" />
        <path d="M900 315H990V338L960 352H895Z" fill="#009cc0" filter="url(#b9)" />
        <path d="M905 445V431H975V445Z" fill="#0090d0" filter="url(#b9)" />
        <path d="M912 310L922 347H956L962 334V310Z" fill="#0008a8" filter="url(#b5)" />
        <path d="M908 450L914 424H950L962 436V452Z" fill="#0010e0" filter="url(#b5)" />
        <path d="M745 450L790 436L860 438L1150 441L1250 456L1262 475H745Z" fill="#001204" filter="url(#b5)" />
        <path d="M835 470V448L1170 448L1225 460V475Z" fill="#00180c" filter="url(#b3)" />
        <path d="M740 320L800 324L870 323L1000 321L1200 319L1255 309L1280 300H740Z" fill="#000802" filter="url(#b5)" />
        <path d="M815 300V320L1150 318L1225 308V300Z" fill="#000602" filter="url(#b3)" />
      </g>
      <path d="M734 370C733 352 748 338 767 323C782 312 794 306 810 306C826 306 833 314 842 326L866 357M734 370Q734 382 766 421" stroke="#1a0a00" strokeWidth="5" fill="none" filter="url(#b3)" />
      <path d="M863 354L885 360L900 371L1003 500L995 500L905 397Z" fill="#023a0e" filter="url(#b3)" />
    </g>
    <path d="M1100 776L1150 737Q1170 724 1165 702Q1162 692 1153 681M1067 796Q1052 795 1043 783M863 355Q886 358 900 371M842 326L863 355M766 421Q767 437 773 445M734 370C733 352 748 338 767 323C782 312 794 306 810 306C826 306 833 314 842 326M734 370Q734 384 742 392L766 421" stroke="#032008" fill="none" />
    <path d="M828 462L891 414L933 466L871 514Z" fill="#0b7a14" stroke="#04300c" />
    <path d="M832 465L893 418L933 466L871 514Z" fill="#fff" stroke="#04300c" strokeWidth=".800" />
    <Hole x={821} y={392} />
    <Hole x={940} y={535} />

    <g stroke="#d0d0d0" strokeLinejoin="round">
      <path d="M1504 203L1543 173L1570 197L1529 229Z" fill="#e4e4e4" />
      <path d="M1570 197L1583 223L1548 253L1529 229Z" fill="#e9e9e9" />
      <path d="M1516 215L1556 184" stroke="#f4f4f4" fill="none" />
      <path d="M1529 229L1570 197" stroke="#bdbdbd" strokeDasharray="6 2" fill="none" />
    </g>
    <g fontSize="9" fontWeight="700" fill="#a6a6a6" fontFamily="Liberation Sans" textAnchor="middle">
      <text transform="translate(1534 194) rotate(215)">BACK</text>
      <text transform="translate(1559 222) rotate(235)">RIGHT</text>
    </g>

    <path d="M1512 884L1468 918M1512 884L1548 916M1526 896L1542 914" stroke="#222" fill="none" />
    <path d="M1512 884L1524 886L1532 895L1512 909L1499 895Z" fill="#c00000" />
    <path d="M1532 895L1540 907L1520 923L1511 909Z" fill="#0000b4" />
    <g fontSize="18" fill="#111" fontFamily="Liberation Sans">
      <text x="1480" y="911">Y</text><text x="1539" y="908">Z</text><text x="1545" y="909">X</text>
    </g>
  </Scene>
);

/* ---------- ribbon pieces ---------- */
const Group = ({ w, name, pad, more, cut, children }: { w: number; name: string; pad?: string; more?: boolean; cut?: boolean; children: ReactNode }) => (
  <GroupBox $w={w}>
    <GroupBody $pad={pad}>{children}</GroupBody>
    <GroupName $cut={cut}>{name}{more && <Caret w={8} />}</GroupName>
  </GroupBox>
);

const tabs: [string, number][] = [
  ['Home', 53], ['Tools', 46], ['View', 46], ['Geometry', 72], ['Mesh', 48], ['Boundary Conditions', 133], ['Optimization', 90],
  ['Results', 55], ['Reports', 61], ['Start & Learn', 89], ['Community', 84],
];

const chips: Record<string, [string, string, string][]> = {
  a: [['#e0a818', '#fff', 'tri']],
  b: [['#f2fbf0', '#2c7a3c', 'in']],
  c: [['#1f8a5c', '#fff', 'grid']],
  d: [['#1b7fae', '#fff', 'lines'], ['#1f8a2c', '#fff', 'in'], ['#b8860f', '#fff', 'out'], ['#8c3744', '#fff', 'warp']],
  e: [['#dff0fb', '#1b5f9e', 'linesx'], ['#e8f7e4', '#2c7a3c', 'in'], ['#fdf0c8', '#b8860f', 'out'], ['#fbe9e9', '#8c3744', 'warp']],
};
const studies: [string, string][] = [
  ['p031204-002_study', 'a'], ['p031204-002_study (Gate Location)', 'b'], ['molding window', 'c'], ['fill cool pack warp', 'd'], ['molding window (copy)', 'e'],
];

type Task = { text: ReactNode; icon: ReactNode; done?: boolean; end?: ReactNode };
const tasks: Task[] = [
  { text: 'Part (p031204-002.stl)', icon: <PartIcon fill="#f2b92c" line="#c58a12" />, done: true },
  { text: 'Dual Domain Mesh (12528 elements)', icon: <PartIcon fill="#e6f6e0" line="#4ea84a" />, done: true },
  { text: 'Gate Location', icon: <GateIcon />, done: true },
  { text: 'Generic PP: Generic Default', icon: <CupIcon />, done: true },
];
const tasksAfter: Task[] = [
  { text: 'Set Injection Locations...', icon: <SyringeIcon /> },
  { text: 'Process Settings (Default)', icon: <ProcessIcon />, done: true },
  { text: <Muted>Analysis complete</Muted>, icon: <ArrowIcon /> },
];
const TaskLine = ({ t }: { t: Task }) => (
  <TaskRow><Slot $w={19}>{t.done && <Tick />}</Slot><Slot $w={22}>{t.icon}</Slot>{t.text}</TaskRow>
);

type Layer = { text: string; on: boolean; level: number; folder?: boolean };
const layers: Layer[] = [
  { text: 'Default Layer', on: true, level: 1 },
  { text: 'CAD Geometry', on: false, level: 1, folder: true },
  { text: 'Stl Representation', on: false, level: 2 },
  { text: 'Mesh Nodes', on: true, level: 1, folder: true },
  { text: 'Nodes', on: true, level: 2 },
  { text: 'Mesh Elements', on: true, level: 1, folder: true },
  { text: 'Triangles', on: true, level: 2 },
];
const LayerLead = ({ l, last }: { l: Layer; last: boolean }) => (
  <Icon w={l.level === 1 ? 24 : 43} h={16}>
    {!last && <path d="M12.500 0v16" stroke="#888" strokeDasharray="1 1" />}
    {l.level === 1 ? <path d="M13 8.500h10" stroke="#888" strokeDasharray="1 1" /> : <path d="M31.500 0v8.500H43" stroke="#888" strokeDasharray="1 1" />}
    {l.folder && <><path d="M7 3h11v9H7z" fill="#fff" /><path d="M8 6l3.500 4L15 6" stroke="#444" strokeWidth="2" /></>}
  </Icon>
);
const layerToolIcons: [ReactNode, boolean][] = [
  [<><path d="M5 4h9v11H3V7" fill="#fff" stroke="#4a78c0" /><path d="M14 10l-4 5h4z" fill="#4a78c0" /><path d="M3 0v6M0 3h6" stroke="#e8b820" strokeWidth="2" /></>, false],
  [<><path d="M2 4l1-2h4l2 2h5v9H2z" fill="#f0c22e" stroke="#ad8414" /></>, false],
  [<><path d="M2 7l4 3 8-8" stroke="#8a8a8a" strokeWidth="2" /><path d="M5 6l3 8 4-6" stroke="#999" strokeWidth="2" /></>, true],
  [<><path d="M2 13l7-7 2 2-7 7z" fill="#f2f2f2" stroke="#888" /><path d="M8 4l3-3 4 4-3 3z" fill="#e4e4e4" stroke="#888" /></>, false],
  [<path d="M2 3h4l3 2 5-1-3 4 4 5-6-3-5 4 2-5z" fill="#7c7c7c" />, true],
  [<><path d="M1 1h11v12H1z" fill="#dbe7f8" stroke="#3f64a8" /><path d="M4 3h11v12H4z" fill="#fff" stroke="#3f64a8" /><path d="M6 7h2M6 10h2M6 13h2M10 7h3M10 10h3M10 13h3" stroke="#3f64a8" strokeWidth="1.500" /></>, false],
  [<><path d="M2 1h11l1 14H2z" fill="#f3f3f3" /><path d="M4 10h8l-4-4z" fill="#999" /><path d="M4 12h8" stroke="#aaa" /></>, true],
  [<><path d="M3 3h10v5H3z" fill="#999" /><path d="M8 8v4" stroke="#909090" strokeWidth="2" /><path d="M5 11h6l-3 4z" fill="#909090" /></>, true],
  [<><path d="M1 1h11v12H1z" fill="#dbe7f8" stroke="#3f64a8" /><path d="M4 3h11v12H4z" fill="#fff" stroke="#3f64a8" /><path d="M6 5l7 8M13 5l-7 8" stroke="#d02a2a" strokeWidth="2.500" /></>, false],
];

const navIcons: ReactNode[] = [
  <path d="M5 0v13l3-3 2 5 2-1-2-5h4z" fill="#fff" stroke="#999" />,
  <><ellipse cx="8" cy="8" rx="3" ry="7" stroke="#889" /><path d="M4 11C-2 9 0 5 8 5s10 4 4 6M4 11l-2-3M12 11l2-3M6 8h4M8 6v4" stroke="#778" /></>,
  <path d="M5 15L1 9l1-1 3 2L3 4l2-1 2 4V2h2l1 5 1-4 2 1v2l2-1v5c0 3-2 5-4 5z" fill="#fff" stroke="#909090" />,
  <><circle cx="6" cy="8" r="5" stroke="#999" /><path d="M9 11l4 4" stroke="#888" strokeWidth="2.500" /><path d="M13 1v5M10 3h6M10 8h6" stroke="#999" /></>,
  <><circle cx="7" cy="7" r="6" stroke="#999" /><path d="M4 4h6v6H4z" stroke="#999" /><path d="M11 11l4 4" stroke="#888" strokeWidth="3" /></>,
  <><circle cx="7" cy="7" r="6" stroke="#999" /><path d="M5 3h3l2 2v6H5z" stroke="#999" /><path d="M11 11l4 4" stroke="#888" strokeWidth="3" /></>,
  <><path d="M8 0v6M8 10v6M0 8h6M10 8h6" stroke="#888" strokeWidth="1.500" /><circle cx="8" cy="8" r="1.500" stroke="#999" /></>,
  <><path d="M1 4h14M1 2v4M15 2v4" stroke="#888" /><path d="M1 10h14v3H1z" fill="#e3d77a" stroke="#a89a3a" /></>,
  <><path d="M1 6h14v9H1z" stroke="#999" strokeWidth="1.500" /><path d="M4 9h8v4H4z" fill="#ccc" stroke="#999" /><path d="M3 3h8M11 1l2 4" stroke="#999" /></>,
];

const glow = '#dfeef8';
const recIcons: ReactNode[] = [
  <><path d="M1 7h4l6-5v13l-6-5H1z" fill="#4a86b0" stroke={glow} strokeWidth="1.500" /><path d="M13 5q3 3 0 7M15 3q4 5 0 11M17 1q6 7 0 15" stroke="#9fd0ee" strokeWidth="1.500" /></>,
  <><rect x="6.500" y="0.500" width="9" height="12" rx="4" fill="#3f8fca" stroke={glow} strokeWidth="1.500" /><path d="M5 8q0 7 6 7t6-7M11 15v3M7 18h8M8 4h6M8 7h6M8 10h6" stroke={glow} /></>,
  <><circle cx="11" cy="8" r="7.500" fill="#4a86b0" stroke={glow} /><circle cx="11" cy="8" r="4" fill="#1e4560" stroke="#8fc3e4" /><path d="M6 15h10l1 3H5z" fill="#4a86b0" stroke={glow} /></>,
  <path d="M7 1v15l4-4 2 6 3-1-3-6h5z" fill="#fff" stroke="#111" strokeWidth="1.500" />,
  <><path d="M3 17l1-5L15 1l5 4-11 11z" fill="#2f8ac4" stroke={glow} strokeWidth="1.500" /><path d="M3 17l1-5 5 4z" fill="#fff" /><path d="M2 18l2-1-1-2z" fill="#c33" /></>,
  <path d="M2 4h6l2 2h7v3h2l-2 8H2z" fill="#f0c544" stroke="#f8dc83" />,
  <><circle cx="11" cy="9" r="7" stroke={glow} strokeWidth="3" strokeDasharray="3 2" /><circle cx="11" cy="9" r="6" fill="#33566f" /><circle cx="11" cy="9" r="2.500" fill="#eef" /></>,
];

export default function App() {
  return (
    <App_>
      <GlobalStyle />
      <Defs />
      <TitleStrip>
        <StripBar $w={290} $gap={115} $c="#9a9a9a" />
        <StripBar $w={14} $gap={930} $c="#8c8c8c" />
        <StripBar $w={180} $c="#111" />
        <StripBar $w={218} $c="#a5a5a5" />
      </TitleStrip>
      <MenuBar>
        {tabs.map(([t, w]) => <MenuTab key={t} $w={w} $active={t === 'Results'}>{t}</MenuTab>)}
        <MenuToggle aria-label="Minimize ribbon">
          <Icon w={14} h={8}><rect width="14" height="8" rx="2" fill="#eee" /><path d="M4 5.500h6l-3-3z" fill="#333" /></Icon>
          <Caret c="#eee" />
        </MenuToggle>
      </MenuBar>
      <AppButton><span>PRO</span><span>SYN</span></AppButton>

      <Ribbon>
        <Group w={165} name="Plots" cut>
          <BigBtn $w={50}><NewPlotIcon />New Plot<Caret /></BigBtn>
          <SmallCol $top={20} $left={13}>
            <SmallBtn><NotesIcon />Notes</SmallBtn>
            <SmallBtn $off><CurveIcon />Add XY Curve</SmallBtn>
          </SmallCol>
        </Group>
        <Group w={125} name="Properties">
          <BigBtn $w={62}><PlotPropsIcon />{'Plot\nProperties'}</BigBtn>
          <BigBtn $w={62}><SaveIcon />{'Save\nDefaults'}<CornerCaret><Caret /></CornerCaret></BigBtn>
        </Group>
        <Group w={174} name="Animation" pad="21px 0 0 3px">
          <AnimCol>
            <AnimRow>
              {animPaths.map(([d, off], i) => (
                <AnimBtn key={i} aria-label={`Animation ${i + 1}`}><Icon vb="0 0 16 16"><path d={d} fill="#fff" stroke={off ? '#c8c8c8' : '#4a4a4a'} strokeWidth="1.200" /></Icon></AnimBtn>
              ))}
            </AnimRow>
            <SliderRow><Slider type="range" min="0" max="1" step="0.001" defaultValue="1" />1.000</SliderRow>
          </AnimCol>
        </Group>
        <Group w={111} name="Examine">
          <BigBtn $w={55}><ExamineIcon />Examine</BigBtn>
          <BigBtn $w={53} $off><MinMaxIcon />{'Show\nMin/Max'}</BigBtn>
        </Group>
        <Group w={67} name="Histogram"><BigBtn $w={65} $off><HistIcon />Histogram</BigBtn></Group>
        <Group w={225} name="Scaling" pad="20px 0 0 6px">
          <ScaleCol>
            <ScaleRow>
              <span>0.00</span>
              <Icon w={96} h={19}><path d="M0 12l5-6v12zM96 12l-5-6v12z" fill="#000" /><path d="M10.500 17v-4" stroke="#222" /><path d="M10 16h81" stroke="#222" strokeWidth="6" strokeDasharray="1 9" /></Icon>
              <span>1.00</span>
            </ScaleRow>
            <ScaleBtns>
              <SmallBtn><SetScaleIcon />Set Scale</SmallBtn>
              <SmallBtn $off><SetScaleIcon off />Reset Scale</SmallBtn>
            </ScaleBtns>
          </ScaleCol>
        </Group>
        <Group w={81} name="Warpage">
          <SmallCol $top={20} $left={7}>
            <SmallBtn $off><WarpIcon />Visualize</SmallBtn>
            <SmallBtn $off><WarpIcon />Restore</SmallBtn>
          </SmallCol>
        </Group>
        <Group w={218} name="Export and Publish" more>
          <BigBtn $w={76}><DefectIcon />{'Defect\nVisualization'}</BigBtn>
          <BigBtn $w={54}><MfrIcon />{'Moldflow\nResults'}</BigBtn>
          <SmallCol $top={9} $left={7}>
            <SmallBtn $gap={6}><MarkIcon kind="on" />Mark<Caret /></SmallBtn>
            <SmallBtn $gap={6}><MarkIcon kind="off" />Unmark<Caret /></SmallBtn>
            <SmallBtn $off><MarkIcon kind="xy" />XY Plot</SmallBtn>
          </SmallCol>
        </Group>
        <Group w={83} name="Cutting Plane">
          <SmallCol $top={20} $left={15}>
            <SmallBtn><CutIcon />Edit</SmallBtn>
            <SmallBtn $off><MoveIcon />Move</SmallBtn>
          </SmallCol>
        </Group>
        <Group w={60} name="Windows" pad="10px 0 0 5px">
          <IconGrid $cols={2}>{windowArt.map((_, n) => <GridBtn key={n} aria-label={`Arrange ${n + 1}`}><WindowIcon n={n} /></GridBtn>)}</IconGrid>
        </Group>
        <Group w={79} name="Locking" pad="10px 0 0 5px">
          <IconGrid $cols={3}>{Array.from({ length: 9 }, (_, n) => <GridBtn key={n} aria-label={`Lock ${n + 1}`}><LockIcon n={n} /></GridBtn>)}</IconGrid>
        </Group>
        <RibbonRest />
      </Ribbon>

      <Work>
        <LeftDock>
          <GripRow><Grip /><CloseBox aria-label="Close"><Icon w={7}><path d="M1 1l5 5M6 1L1 6" stroke="#000" strokeWidth="1.800" /></Icon></CloseBox></GripRow>
          <Tabs><Tab $w={36} $on>Tasks</Tab><Tab $w={40}>Tools</Tab><Tab $w={78}>Shared Views</Tab></Tabs>
          <StudyBox>
            <StudyList>
              {studies.map(([name, key], i) => (
                <StudyRow key={name} $on={i === 0}>
                  <Icon w={13} h={16}><path d={i === 4 ? 'M2.500 0v8.500H13' : 'M2.500 0v16M3 8.500h10'} stroke="#999" strokeDasharray="1 1" /></Icon>
                  <Slot $w={20}><DocIcon /></Slot>
                  <StudyName>{name}</StudyName>
                  {chips[key].map(([bg, ink, kind]) => <ChipIcon key={kind} bg={bg} ink={ink} kind={kind} />)}
                </StudyRow>
              ))}
            </StudyList>
            <ScrollBar>
              <ScrollBtn aria-label="Scroll up"><Chevron up /></ScrollBtn>
              <ScrollThumb />
              <ScrollBtn aria-label="Scroll down"><Chevron /></ScrollBtn>
            </ScrollBar>
          </StudyBox>
          <TaskTree>
            <TaskRow><Slot $w={25}><DocIcon /></Slot>Study Tasks : p031204-002_study</TaskRow>
            {tasks.map((t, i) => <TaskLine key={i} t={t} />)}
            <TaskRow><Slot $w={49} />Material Data Completeness<RowEnd><MatIcon kind="in" c="#3a8a3a" /><MatIcon kind="out" c="#b8860f" /><MatIcon kind="warp" c="#8c3744" /></RowEnd></TaskRow>
            <TaskRow><Slot $w={49} />Environmental Properties<RowEnd><DialIcon /></RowEnd></TaskRow>
            {tasksAfter.map((t, i) => <TaskLine key={i} t={t} />)}
            <TaskRow><RowLabel><Slot $w={25}><Slot $w={5} /><Check type="checkbox" $size={11} $ink="#000" /></Slot>Logs*</RowLabel></TaskRow>
            <TaskRow><Slot $w={19}><Icon w={16} h={8}><path d="M7 1h9l-4 6z" fill="#aaa" /></Icon></Slot><Slot $w={22}><PartIcon fill="#4fc43a" line="#2e8a22" /></Slot>Results</TaskRow>
            <TaskRow><RowLabel><Slot $w={25} /><Slot $w={20}><Check type="checkbox" $size={11} $ink="#000" /></Slot>Flow resistance indicator</RowLabel></TaskRow>
            <TaskRow $on><RowLabel><Slot $w={25} /><Slot $w={20}><Check type="checkbox" defaultChecked $size={11} $ink="#000" /></Slot>Gating suitability</RowLabel></TaskRow>
          </TaskTree>
        </LeftDock>

        <Viewport>
          <Model />
          <Caption>{'Gating suitability\n = 1.000'}</Caption>
          <Legend><LegendBar /><LegendEnds><span>Best</span><span>Worst</span></LegendEnds></Legend>
          <Brand>AUTODESK<br />Moldflow Insight</Brand>
          <ScaleMark><Ruler />Scale (200 mm)</ScaleMark>
          <Angles>177<br />-42<br />50</Angles>
          <WindowBtns>
            <button aria-label="Minimize"><Icon w={12}><path d="M.500 7.500h11v3H.500z" stroke="#555" /></Icon></button>
            <button aria-label="Restore"><Icon w={12}><path d="M3.500.500h8v8h-2M.500 3.500h8v8h-8zM3 6h3v3H3z" stroke="#555" strokeWidth="1.300" /></Icon></button>
            <button aria-label="Close"><Icon w={12}><path d="M1 1h3l2 3 2-3h3L8 6l3 5H8L6 8l-2 3H1l3-5z" stroke="#555" /></Icon></button>
          </WindowBtns>
          <NavBar>
            <NavEnd aria-label="Close bar"><Icon w={9} h={10}><circle cx="4.500" cy="5" r="3.500" stroke="#aaa" /><path d="M3 3.500l3 3M6 3.500l-3 3" stroke="#aaa" /></Icon></NavEnd>
            <NavWheel aria-label="Wheel">
              <Icon w={22}><path d="M11 1h10v10A10 10 0 1111 1z" stroke="#aaa" strokeWidth="1.300" /><path d="M11 3q8 0 8 8t-8 8-8-8 8-8z" stroke="#ccc" /><circle cx="11" cy="11" r="5.500" stroke="#aaa" fill="#eee" /></Icon>
              <Caret c="#888" />
            </NavWheel>
            {navIcons.map((d, i) => <NavBtn key={i} $on={i === 1} aria-label={`View tool ${i + 1}`}><Icon w={16}>{d}</Icon></NavBtn>)}
            <NavEnd aria-label="Bar options"><Icon w={9} h={10}><circle cx="4.500" cy="5" r="3.500" stroke="#aaa" /><path d="M3 5h3" stroke="#aaa" /></Icon></NavEnd>
          </NavBar>
          <SpinCursor>
            <Icon w={24} h={22}>
              <path d="M4 9A8.500 8.500 0 0119 5M20 13A8.500 8.500 0 015 17M7 12A6 6 0 0113 4l4 2-2 3-3-2M17 10a6 6 0 01-6 8l-4-2 2-3 3 2M1 11l3-4 4 4H6v2l-2-2zM23 11l-3 4-4-4h2V9l2 2z" stroke="#111" />
            </Icon>
          </SpinCursor>
        </Viewport>

        <RightDock>
          <LayerGrip><Grip /></LayerGrip>
          <LayerTools>{layerToolIcons.map(([d, off], i) => <LayerBtn key={i} $off={off} aria-label={`Layer tool ${i + 1}`}><Icon w={16}>{d}</Icon></LayerBtn>)}</LayerTools>
          <LayerTree>
            <LayerRoot><Icon w={17} h={15}><path d="M1 13.500l5-4h10l-4 4zM1 9.500l5-4h10l-4 4zM1 5l5-4h10l-4 4z" fill="#fff" stroke="#444" /></Icon>Layers</LayerRoot>
            {layers.map((l, i) => (
              <LayerRow key={l.text} $strong={i === 0}>
                <LayerLead l={l} last={i === 6} />
                <LayerLabel><Check type="checkbox" defaultChecked={l.on} $size={14} $ink="#2a1fd0" />{l.folder ? <FolderIcon /> : <PlaneIcon />}{l.text}</LayerLabel>
              </LayerRow>
            ))}
          </LayerTree>
        </RightDock>
      </Work>

      <Recorder>
        <RecBtn $w={50} aria-label="Record"><Icon w={34}><circle cx="17" cy="17" r="15" fill="#d8002c" stroke="#f2dfe2" strokeWidth="1.500" /></Icon></RecBtn>
        <RecStack>
          <RecBtn $w={27} aria-label="Capture"><Icon w={22} h={18}><path d="M1 4h5l1-3h7l1 3h5v12H1z" fill="#34465e" stroke="#b8cbe0" /><circle cx="11" cy="10" r="4.500" fill="#6c8fd0" stroke="#cdd9ee" /></Icon></RecBtn>
          <RecBtn $w={27} aria-label="Pause"><Icon w={18}><path d="M1 1h6v16H1zM11 1h6v16h-6z" fill="#3f8fca" stroke={glow} /></Icon></RecBtn>
        </RecStack>
        <RecTime role="timer" aria-label="00:00:00">
          <Icon w={70} h={18}>
            {[0, 11, 24, 35, 48, 59].map(x => <path key={x} d={`M${x + 1}.500 1.500h8v15h-8zM${x + 2} 16l7-14`} stroke="#138a2a" />)}
            <path d="M22.500 6v2M22.500 11v2M46.500 6v2M46.500 11v2" stroke="#138a2a" />
          </Icon>
        </RecTime>
        <RecStack>
          <RecRow>
            <RecSize>1823 × 948</RecSize>
            <RecBtn $w={28} $on aria-label="Region"><Icon w={18} h={15}><path d="M1.500 1.500h15v12h-15z" fill="#c9cdc9" stroke="#17c042" strokeWidth="2" /></Icon></RecBtn>
            <RecBtn $w={28} aria-label="Hide"><Icon w={18}><path d="M2 10h14v3H2z" fill="#3f8fca" stroke={glow} /></Icon></RecBtn>
            <RecBtn $w={28} aria-label="Quit"><Icon w={14}><path d="M2 2l10 10M12 2L2 12" stroke="#fbdada" strokeWidth="5" /><path d="M2 2l10 10M12 2L2 12" stroke="#d0142c" strokeWidth="3" /></Icon></RecBtn>
          </RecRow>
          <RecRow>{recIcons.map((d, i) => <RecBtn key={i} $w={28} $on={i === 3} aria-label={`Recorder tool ${i + 1}`}><Icon w={22} h={19} vb="0 0 22 19">{d}</Icon></RecBtn>)}</RecRow>
        </RecStack>
      </Recorder>
    </App_>
  );
}
